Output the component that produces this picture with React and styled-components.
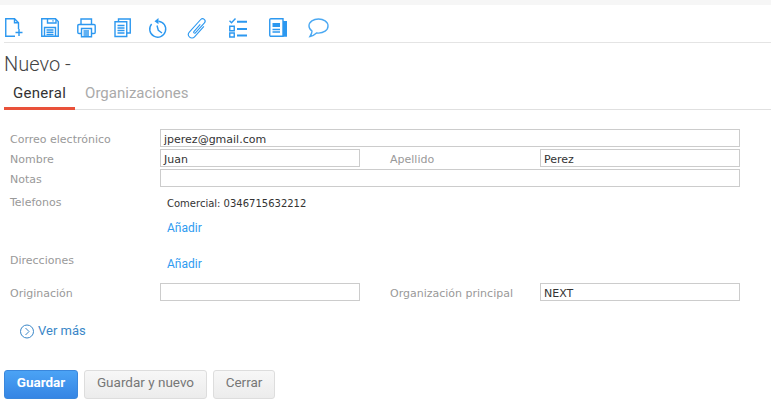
import React from "react";
import styled, { createGlobalStyle } from "styled-components";

const Global = createGlobalStyle`
  html, body { margin: 0; padding: 0; background: #fff; }
  body { width: 771px; height: 417px; overflow: hidden; }
`;
const Page = styled.div`
  width: 771px; height: 417px; display: flex; flex-direction: column;
  border-top: 5px solid #f6f6f6; box-sizing: border-box; background: #fff;
  font-family: "DejaVu Sans", sans-serif;
`;
const Toolbar = styled.div`
  height: 38px; margin-left: 4px; box-sizing: border-box; border-bottom: 1px solid #e4e4e4;
  display: flex; align-items: flex-start; padding: 13px 0 0 1px; color: #2c98f0;
`;
const Icon = styled.svg`
  width: ${p => p.$w || 20}px; height: 20px; flex: none; display: block; overflow: visible;
  margin-right: ${p => p.$gap}px; fill: none; stroke: currentColor; stroke-width: 1.4;
`;
const Title = styled.h1`
  margin: 8px 0 0 4px; font: 300 20px/26px Roboto, sans-serif; color: #444;
`;
const Tabs = styled.div`
  display: flex; height: 31px; margin: 1px 0 0 4px; border-bottom: 1px solid #e0e0e0;
`;
const Tab = styled.div`
  font: 400 15px/30px Roboto, sans-serif; box-sizing: border-box; height: 32px;
  padding: 0 ${p => p.$active ? "9px" : "0"};
  letter-spacing: ${p => p.$active ? "0.3px" : "0"};
  color: ${p => p.$active ? "#333" : "#aaa"};
  border-bottom: ${p => p.$active ? "3px solid #e9513a" : "none"};
  margin-left: ${p => p.$active ? "0" : "10px"};
`;
const Form = styled.div`
  padding: 18px 31px 0 10px; display: flex; flex-direction: column;
`;
const Row = styled.div`
  display: grid; grid-template-columns: 150px 200px 30px 150px 200px; height: 20px; align-items: start;
`;
const Label = styled.div`
  color: #999; font: 400 11px/18px "DejaVu Sans", sans-serif; padding-top: 3px; height: 17px;
  margin-top: ${p => p.$top || 0}px;
`;
const Input = styled.div`
  height: 18px; margin-top: 1px; box-sizing: border-box; border: 1px solid #ccc; padding: 2px 3px 0;
  color: #333; font: 400 11px/16px "DejaVu Sans", sans-serif; overflow: hidden;
  grid-column: ${p => p.$wide ? "2 / span 4" : "auto"};
`;
const Block = styled.div`
  display: grid; grid-template-columns: 150px 1fr; height: ${p => p.$h}px; align-items: start;
`;
const Phone = styled.div`
  padding-left: 7px; margin-top: 8px; font: 400 10px/16px "DejaVu Sans", sans-serif; color: #333;
`;
const Add = styled.a`
  display: block; padding-left: 7px; margin-top: ${p => p.$top}px;
  font: 400 12px/16px Roboto, sans-serif; color: #2f9bf0;
`;
const More = styled.div`
  display: flex; align-items: center; gap: 4px; margin: 21px 0 0 20px; height: 16px; color: #3a87c8;
  font: 400 13px/16px Roboto, sans-serif;
`;
const Buttons = styled.div`
  display: flex; gap: 6px; margin: 31px 0 0 4px;
`;
const Button = styled.button`
  height: 29px; padding: 0 0 3px; width: ${p => p.$w}px; box-sizing: border-box; border-radius: 3px;
  font: ${p => p.$primary ? 700 : 400} 13.5px/1 Roboto, sans-serif;
  color: ${p => p.$primary ? "#fff" : "#777"};
  border: 1px solid ${p => p.$primary ? "#3a87dc" : "#ddd"};
  background: ${p => p.$primary ? "linear-gradient(#4ba3f5,#3585e4)" : "linear-gradient(#f7f7f7,#ececec)"};
`;

const icons = [
  { gap: 16, d: <>
    <path d="M10 18.250H.75V.75H9.500L13.500 4.750V11" />
    <path d="M9.500 .75V4.750H13.500" />
    <path d="M10.500 14.500h7M14 11v7" />
  </> },
  { gap: 16, d: <>
    <path d="M.75 .75H14.500L17.250 3.500V18.250H.75Z" />
    <path d="M6.500 .75V5H15V1" />
    <path d="M12 2.200v1.400" />
    <path d="M3.500 18.250V9.500H14.500V18.250" />
    <path d="M5.500 12h7M5.500 14.300h7M5.500 16.500h7" />
  </> },
  { gap: 17, d: <>
    <path d="M4 6.500V1H14.500V6.500" />
    <path d="M4.500 15.500H2a1.200 1.200 0 0 1-1.200-1.200V7.700A1.200 1.200 0 0 1 2 6.500H17a1.200 1.200 0 0 1 1.200 1.200V14.300A1.200 1.200 0 0 1 17 15.500H14.500" />
    <path d="M4.500 10.500H14.500V18.750H4.500Z" />
    <path d="M6.500 13h5.500M6.500 15h5.500M6.500 17h5.500" />
  </> },
  { gap: 18, w: 17, d: <>
    <path d="M4.500 3.500V1H16.250V15H13" />
    <path d="M1 3.750H12.750V18.500H1Z" />
    <path d="M3.500 7.500h7M3.500 10h7M3.500 12.500h7M3.500 15h7" />
  </> },
  { gap: 22, w: 18, d: <>
    <path d="M9.500 3.200A8 8 0 1 1 2.600 6" />
    <path d="M5.500 3.200 9.500 0V6.200Z" fill="currentColor" stroke="none" />
    <path d="M8 7.500 9.300 12.300 13 15" />
  </> },
  { gap: 22, w: 18, d: <g transform="rotate(42 9 10.500)" strokeWidth="1.1">
    <path d="M12 5V19a3.500 3.500 0 0 1-7 0V2a2.500 2.500 0 0 1 5 0V15.500a1 1 0 0 1-2 0V6" />
  </g> },
  { gap: 22, w: 18, d: <>
    <path d="M.5 2.800 2.500 4.800 6.500 .5" />
    <path d="M.75 8.250H5.250V12.750H.75ZM.75 15H5.250V19H.75Z" />
    <path d="M8 3.700H18M8 11H18M8 17.500H18" strokeWidth="2" />
  </> },
  { gap: 21, w: 18, d: <>
    <path d="M2 .75H14V18.250H2A1.200 1.200 0 0 1 .75 17V2A1.200 1.200 0 0 1 2 .75Z" />
    <path d="M14 3H18V18.750H14Z" fill="currentColor" stroke="none" />
    <path d="M3.500 5H11V9H3.500Z" fill="currentColor" stroke="none" />
    <path d="M3.500 11.500H11M3.500 14H11" />
  </> },
  { gap: 0, w: 21, d: <g stroke="#4aa8f2">
    <path d="M10.500 1C5.500 1 1 3.800 1 8C1 10 2.200 11.800 4 13C4 15 3 17 2 18.500C4.500 18 7 16.500 8.500 15C9.200 15.100 9.800 15.100 10.500 15.100C15.500 15.100 20 12.300 20 8C20 3.800 15.500 1 10.500 1Z" />
  </g> },
];

export default function App() {
  return (
    <Page>
      <Global />
      <Toolbar>
        {icons.map((i, n) => <Icon key={n} $w={i.w} $gap={i.gap} viewBox={`0 0 ${i.w || 20} 20`}>{i.d}</Icon>)}
      </Toolbar>
      <Title>Nuevo -</Title>
      <Tabs>
        <Tab $active>General</Tab>
        <Tab>Organizaciones</Tab>
      </Tabs>
      <Form>
        <Row><Label>Correo electrónico</Label><Input $wide>jperez@gmail.com</Input></Row>
        <Row><Label>Nombre</Label><Input>Juan</Input><span /><Label>Apellido</Label><Input>Perez</Input></Row>
        <Row><Label>Notas</Label><Input $wide /></Row>
        <Block $h={57}>
          <Label $top={3}>Telefonos</Label>
          <div><Phone>Comercial: 0346715632212</Phone><Add $top={8}>Añadir</Add></div>
        </Block>
        <Block $h={37}>
          <Label $top={4}>Direcciones</Label>
          <Add $top={11}>Añadir</Add>
        </Block>
        <Row><Label>Originación</Label><Input /><span /><Label>Organización principal</Label><Input>NEXT</Input></Row>
      </Form>
      <More>
        <svg width="14" height="15" viewBox="0 0 14 15" fill="none" stroke="#3a87c8"><circle cx="7" cy="7.500" r="6.500" /><path d="M5.500 4l3.500 3.500L5.500 11" /></svg>
        Ver más
      </More>
      <Buttons>
        <Button $primary $w={74}>Guardar</Button>
        <Button $w={123}>Guardar y nuevo</Button>
        <Button $w={62}>Cerrar</Button>
      </Buttons>
    </Page>
  );
}
